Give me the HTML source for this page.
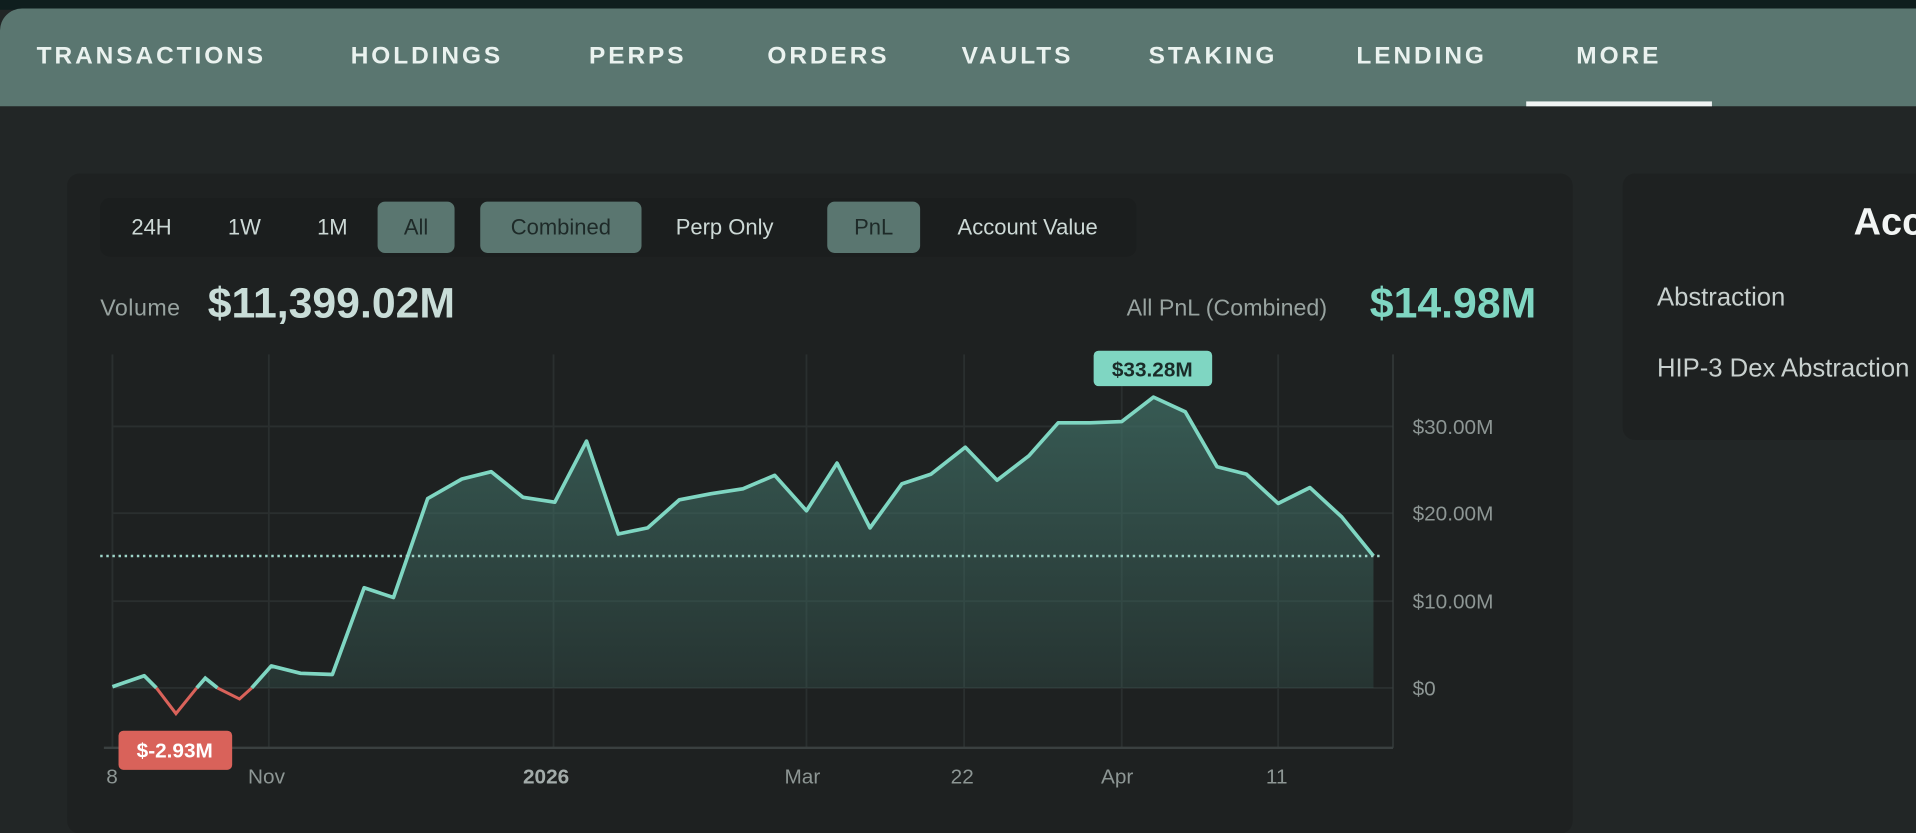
<!DOCTYPE html>
<html><head><meta charset="utf-8"><style>
html,body{margin:0;padding:0;width:1916px;height:817px;overflow:hidden;background:#222626;font-family:"Liberation Sans",sans-serif}
#s{position:absolute;left:0;top:0;width:1568px;height:669px;transform:scale(1.22194);transform-origin:0 0;background:#222626}
.a{position:absolute;white-space:nowrap}
.top{left:0;top:0;width:1568px;height:8px;background:#0f1e1e}
.bar{left:0;top:7px;width:1568px;height:80px;background:#5a7670;border-top-left-radius:18px}
.tab{top:35px;font-size:20px;letter-spacing:2.4px;color:#eaf2ef;font-weight:bold}
.card{background:#1e2121;border-radius:10px}
.btn{top:165px;height:42px;line-height:42px;font-size:18px;color:#cdd9d6;text-align:center;border-radius:6px}
.on{background:#5a7670;color:#1e2a28}
.yl{left:1156px;font-size:17px;color:#8d9694}
.xl{top:626px;font-size:17px;color:#8d9694}
</style></head><body><div id="s">
<div class="a top"></div>
<div class="a bar"></div>
<div class="a tab" style="left:30px">TRANSACTIONS</div>
<div class="a tab" style="left:287px">HOLDINGS</div>
<div class="a tab" style="left:482px">PERPS</div>
<div class="a tab" style="left:628px">ORDERS</div>
<div class="a tab" style="left:787px">VAULTS</div>
<div class="a tab" style="left:940px">STAKING</div>
<div class="a tab" style="left:1110px">LENDING</div>
<div class="a tab" style="left:1290px">MORE</div>
<div class="a" style="left:1249px;top:83px;width:152px;height:4px;background:#f0f4f3"></div>

<div class="a card" style="left:55px;top:142px;width:1232px;height:540px"></div>
<div class="a" style="left:82px;top:162px;width:848px;height:48px;background:#1b1e1e;border-radius:8px"></div>
<div class="a btn" style="left:95px;width:58px">24H</div>
<div class="a btn" style="left:172px;width:56px">1W</div>
<div class="a btn" style="left:244px;width:56px">1M</div>
<div class="a btn on" style="left:309px;width:63px">All</div>
<div class="a btn on" style="left:393px;width:132px">Combined</div>
<div class="a btn" style="left:540px;width:106px">Perp Only</div>
<div class="a btn on" style="left:677px;width:76px">PnL</div>
<div class="a btn" style="left:768px;width:146px">Account Value</div>

<div class="a" style="left:82px;top:242px;font-size:19px;color:#98a3a0;letter-spacing:.4px">Volume</div>
<div class="a" style="left:170px;top:229px;font-size:35px;font-weight:bold;color:#c9ddd8">$11,399.02M</div>
<div class="a" style="left:922px;top:242px;font-size:19px;color:#98a3a0">All PnL (Combined)</div>
<div class="a" style="left:1121px;top:229px;font-size:35px;font-weight:bold;color:#7fd6c2">$14.98M</div>

<svg class="a" style="left:0;top:0" width="1568" height="669">
<defs><linearGradient id="g" x1="0" y1="0" x2="0" y2="1"><stop offset="0" stop-color="#3f6d64" stop-opacity=".75"/><stop offset="1" stop-color="#3f6d64" stop-opacity=".25"/></linearGradient></defs>
<g stroke="#2a2f2f" stroke-width="1.5">
<line x1="92" y1="349" x2="1140" y2="349"/><line x1="92" y1="420" x2="1140" y2="420"/><line x1="92" y1="492" x2="1140" y2="492"/><line x1="92" y1="563" x2="1140" y2="563"/>
<line x1="92" y1="290" x2="92" y2="612"/><line x1="220" y1="290" x2="220" y2="612"/><line x1="453" y1="290" x2="453" y2="612"/><line x1="660" y1="290" x2="660" y2="612"/><line x1="789" y1="290" x2="789" y2="612"/><line x1="918" y1="290" x2="918" y2="612"/><line x1="1046" y1="290" x2="1046" y2="612"/>
</g>
<line x1="85" y1="612" x2="1140" y2="612" stroke="#3a4040" stroke-width="2"/>
<line x1="1140" y1="290" x2="1140" y2="612" stroke="#3a4040" stroke-width="1"/>
<polygon fill="url(#g)" points="92,562 118,553 130,563 160,563 168,555 180,563 205,563 222,545 246,551 272,552 298,481 322,489 350,408 378,392 402,386 428,407 454,411 480,361 506,437 530,432 556,409 582,404 608,400 634,389 660,418 685,379 712,432 738,396 762,388 790,366 816,393 842,373 866,346 892,346 918,345 944,325 970,337 996,382 1020,388 1046,412 1072,399 1098,423 1124,455 1124,563 92,563"/>
<polyline fill="none" stroke="#7fd6c2" stroke-width="3" stroke-linejoin="round" points="92,562 118,553 128,563"/>
<polyline fill="none" stroke="#d9625a" stroke-width="2.5" points="128,563 144,584 161,563"/>
<polyline fill="none" stroke="#7fd6c2" stroke-width="3" points="161,563 168,555 178,563"/>
<polyline fill="none" stroke="#d9625a" stroke-width="2.5" points="178,563 196,572 206,563"/>
<polyline fill="none" stroke="#7fd6c2" stroke-width="3" stroke-linejoin="round" points="206,563 222,545 246,551 272,552 298,481 322,489 350,408 378,392 402,386 428,407 454,411 480,361 506,437 530,432 556,409 582,404 608,400 634,389 660,418 685,379 712,432 738,396 762,388 790,366 816,393 842,373 866,346 892,346 918,345 944,325 970,337 996,382 1020,388 1046,412 1072,399 1098,423 1124,455"/>
<line x1="82" y1="455" x2="1130" y2="455" stroke="#9fd6ca" stroke-width="2" stroke-dasharray="2,3"/>
<rect x="895" y="287" width="97" height="29" rx="4" fill="#7fd6c2"/>
<text x="943" y="308" font-family="Liberation Sans" font-size="17" font-weight="bold" fill="#1a2b28" text-anchor="middle">$33.28M</text>
<rect x="97" y="598" width="93" height="32" rx="4" fill="#d9625a"/>
<text x="143" y="620" font-family="Liberation Sans" font-size="17" font-weight="bold" fill="#fff" text-anchor="middle">$-2.93M</text>
</svg>
<div class="a yl" style="top:340px">$30.00M</div>
<div class="a yl" style="top:411px">$20.00M</div>
<div class="a yl" style="top:483px">$10.00M</div>
<div class="a yl" style="top:554px">$0</div>
<div class="a xl" style="left:87px">8</div>
<div class="a xl" style="left:203px">Nov</div>
<div class="a xl" style="left:428px;font-weight:bold;color:#a3acaa">2026</div>
<div class="a xl" style="left:642px">Mar</div>
<div class="a xl" style="left:778px">22</div>
<div class="a xl" style="left:901px">Apr</div>
<div class="a xl" style="left:1036px">11</div>

<div class="a card" style="left:1328px;top:142px;width:260px;height:218px"></div>
<div class="a" style="left:1517px;top:164px;font-size:31px;font-weight:bold;color:#f2f5f4">Acc</div>
<div class="a" style="left:1356px;top:232px;font-size:21px;color:#c8d0ce">Abstraction</div>
<div class="a" style="left:1356px;top:290px;font-size:21px;color:#c8d0ce">HIP-3 Dex Abstraction</div>
</div></body></html>
